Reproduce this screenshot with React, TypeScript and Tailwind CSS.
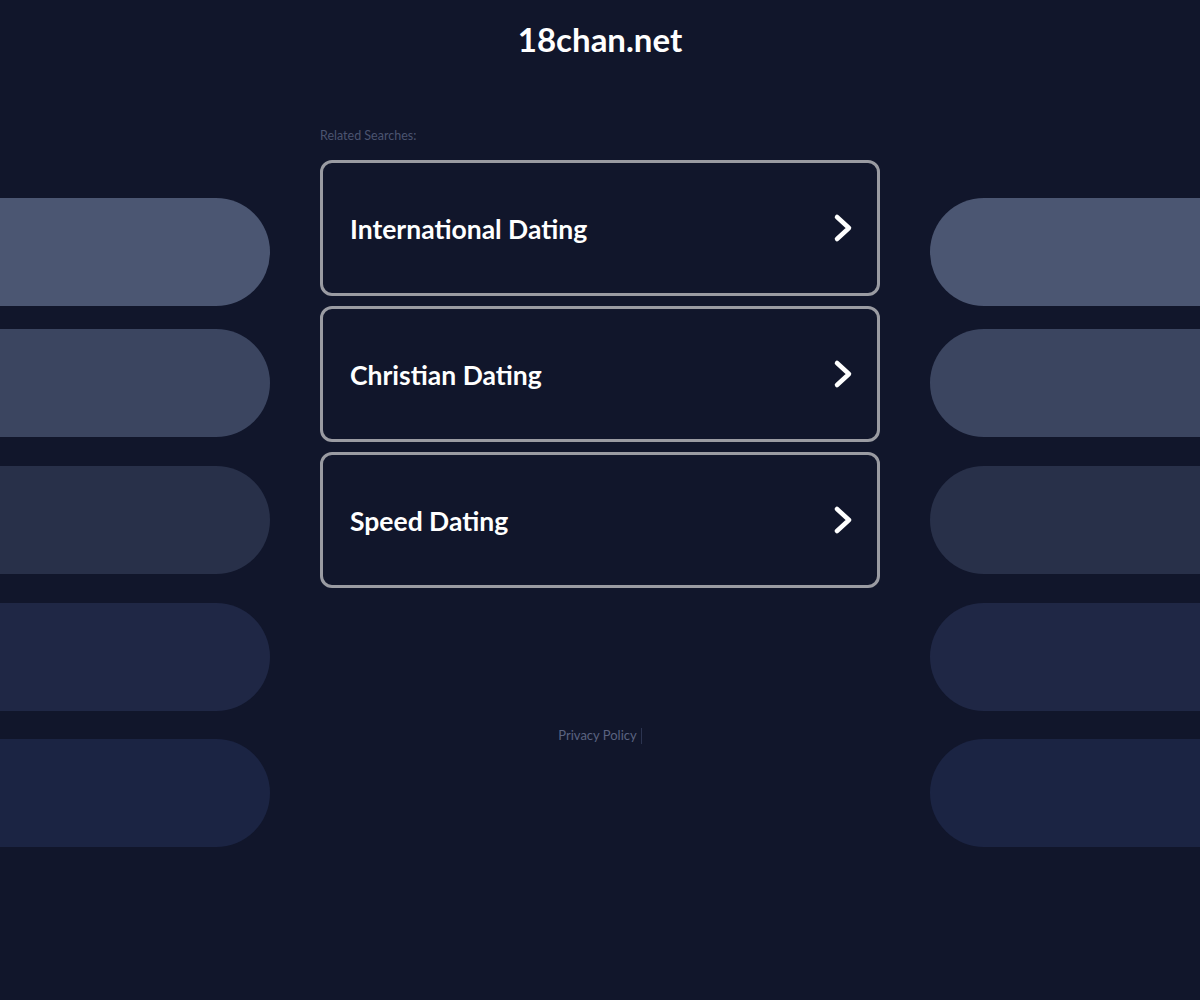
import React from "react";

const pills = ["bg-[#4b5672]", "bg-[#3b4560]", "bg-[#283049]", "bg-[#1f2745]", "bg-[#1b2443]"];
const gaps = ["mt-0", "mt-[23px]", "mt-[29px]", "mt-[29px]", "mt-[28px]"];

const searches = ["International Dating", "Christian Dating", "Speed Dating"];

const Chevron = () => (
  <svg width="24" height="32" viewBox="0 0 24 32" fill="none">
    <path d="M5 5 L17 16 L5 27" stroke="white" strokeWidth="4.5" strokeLinecap="round" strokeLinejoin="round" />
  </svg>
);

const SideColumn = ({ side }: { side: "left" | "right" }) => (
  <div className="w-[270px] pt-[198px] flex flex-col">
    {pills.map((c, i) => (
      <div
        key={i}
        className={`${c} ${gaps[i]} h-[108px] ${side === "left" ? "rounded-r-[54px]" : "rounded-l-[54px]"}`}
      />
    ))}
  </div>
);

const App = () => {
  return (
    <div className="w-full min-h-screen bg-[#11162b] overflow-hidden" style={{ fontFamily: "Lato, 'Noto Sans', sans-serif" }}>
      <div className="flex justify-between">
        <SideColumn side="left" />
        <div className="w-[560px] flex flex-col">
          <div className="h-[80px] flex items-center justify-center">
            <h1 className="text-[33px] font-bold text-white">18chan.net</h1>
          </div>
          <p className="mt-[48px] text-[12.5px] leading-[16px] text-[#4b5470]">Related Searches:</p>
          <div className="mt-[16px] flex flex-col gap-[10px]">
            {searches.map((s) => (
              <div
                key={s}
                className="h-[136px] border-[3px] border-[#9a9ba2] rounded-[12px] flex items-center justify-between pl-[27px] pr-[21px]"
              >
                <span className="pt-[4px] text-[26.5px] font-bold text-white">{s}</span>
                <Chevron />
              </div>
            ))}
          </div>
          <div className="mt-[138px] flex justify-center items-center gap-1 text-[13px] text-[#5b6380]">
            <span>Privacy Policy</span>
            <span className="w-px h-[16px] bg-[#2c3450]" />
          </div>
        </div>
        <SideColumn side="right" />
      </div>
    </div>
  );
};

export default App;
